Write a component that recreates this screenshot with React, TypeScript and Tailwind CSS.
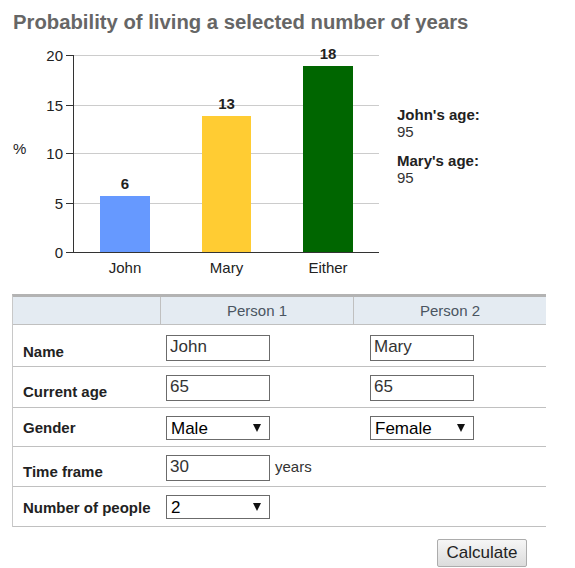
import React from 'react';

const bars = [
  { name: 'John', value: '6', x: 100, w: 50, top: 196, color: '#6699ff' },
  { name: 'Mary', value: '13', x: 202, w: 49, top: 116, color: '#ffcc33' },
  { name: 'Either', value: '18', x: 303, w: 50, top: 66, color: '#006600' },
];

const ticks = [
  { label: '20', y: 55.5 },
  { label: '15', y: 105.5 },
  { label: '10', y: 153.5 },
  { label: '5', y: 203.5 },
  { label: '0', y: 252.5 },
];

function Chart() {
  return (
    <svg width={390} height={245} viewBox="0 40 390 245" className="shrink-0">
      {ticks.slice(0, 4).map(t => (
        <line key={t.label} x1={74} x2={379} y1={t.y} y2={t.y} stroke="#cccccc" strokeWidth={1} />
      ))}
      {ticks.map(t => (
        <g key={'t' + t.label}>
          <line x1={66} x2={74} y1={t.y} y2={t.y} stroke="#333" strokeWidth={1} />
          <text x={63} y={t.y + 5} textAnchor="end" fontSize={15} fill="#222">{t.label}</text>
        </g>
      ))}
      <text x={13} y={154} fontSize={15} fill="#222">%</text>
      {bars.map(b => (
        <g key={b.name}>
          <rect x={b.x} y={b.top} width={b.w} height={252 - b.top} fill={b.color} />
          <text x={b.x + b.w / 2} y={b.top - 7.5} textAnchor="middle" fontSize={15} fontWeight="bold" fill="#222">{b.value}</text>
          <text x={b.x + b.w / 2} y={272.5} textAnchor="middle" fontSize={15} fill="#222">{b.name}</text>
        </g>
      ))}
      <line x1={73.5} x2={73.5} y1={55} y2={253} stroke="#333" strokeWidth={1} />
      <line x1={73} x2={379} y1={252.5} y2={252.5} stroke="#333" strokeWidth={1} />
    </svg>
  );
}

function TextBox({ value, className }: { value: string; className?: string }) {
  return (
    <input
      type="text"
      defaultValue={value}
      className={`w-[104px] h-[26px] border border-[#6b6b6b] bg-white px-[3px] pb-[2px] text-[17px] leading-[19px] text-[#333] outline-none ${className ?? ''}`}
    />
  );
}

function Select({ value, options, className }: { value: string; options: string[]; className?: string }) {
  return (
    <div className={`relative w-[104px] h-[24px] ${className ?? ''}`}>
      <select
        defaultValue={value}
        className="appearance-none w-full h-full border border-[#6b6b6b] bg-white pl-[4px] text-[17px] leading-[19px] text-black outline-none"
      >
        {options.map(o => (
          <option key={o}>{o}</option>
        ))}
      </select>
      <svg width={8} height={8} viewBox="0 0 8 8" className="absolute right-[9px] top-[8px] pointer-events-none">
        <path d="M0 0 L8 0 L4 8 Z" fill="#111" />
      </svg>
    </div>
  );
}

export default function App() {
  return (
    <div className="w-[575px] h-[568px] bg-white font-['Liberation_Sans',Arial,sans-serif] text-[#222]">
      <h1 className="h-[40px] pt-[10px] pl-[13px] text-[20.3px] leading-[24px] font-bold text-[#666]">
        Probability of living a selected number of years
      </h1>

      <div className="flex">
        <Chart />
        <div className="pl-[7px] pt-[66px] text-[15px] leading-[17px]">
          <div className="font-bold text-[#222]">John's age:</div>
          <div className="text-[#333]">95</div>
          <div className="mt-[12px] font-bold text-[#222]">Mary's age:</div>
          <div className="text-[#333]">95</div>
        </div>
      </div>

      <div className="mt-[9px] ml-[12px] w-[534px] border-t-[3px] border-t-[#b3b3b3] border-l border-l-[#c8c8c8]">
        <div className="grid grid-cols-[147px_193px_193px] h-[28px] bg-[#e4ebf2] border-b border-b-[#c0c0c0] text-[15px] leading-[27px] text-[#4a5561]">
          <div />
          <div className="border-l border-l-[#c0c0c0] text-center">Person 1</div>
          <div className="border-l border-l-[#c0c0c0] text-center">Person 2</div>
        </div>

        <div className="grid grid-cols-[147px_193px_193px] h-[42px] border-b border-b-[#c0c0c0]">
          <div className="pl-[10px] pt-[18px] text-[15px] leading-[17px] font-bold">Name</div>
          <div className="pt-[10px] pl-[6px]"><TextBox value="John" /></div>
          <div className="pt-[10px] pl-[17px]"><TextBox value="Mary" /></div>
        </div>

        <div className="grid grid-cols-[147px_193px_193px] h-[41px] border-b border-b-[#c0c0c0]">
          <div className="pl-[10px] pt-[16px] text-[15px] leading-[17px] font-bold">Current age</div>
          <div className="pt-[8px] pl-[6px]"><TextBox value="65" /></div>
          <div className="pt-[8px] pl-[17px]"><TextBox value="65" /></div>
        </div>

        <div className="grid grid-cols-[147px_193px_193px] h-[39px] border-b border-b-[#c0c0c0]">
          <div className="pl-[10px] pt-[11px] text-[15px] leading-[17px] font-bold">Gender</div>
          <div className="pt-[8px] pl-[6px]"><Select value="Male" options={['Male', 'Female']} /></div>
          <div className="pt-[8px] pl-[17px]"><Select value="Female" options={['Male', 'Female']} /></div>
        </div>

        <div className="grid grid-cols-[147px_386px] h-[40px] border-b border-b-[#c0c0c0]">
          <div className="pl-[10px] pt-[16px] text-[15px] leading-[17px] font-bold">Time frame</div>
          <div className="pt-[8px] pl-[6px] flex items-start gap-[5px]">
            <TextBox value="30" />
            <span className="pt-[3px] text-[15px] leading-[17px] text-[#333]">years</span>
          </div>
        </div>

        <div className="grid grid-cols-[147px_386px] h-[40px] border-b border-b-[#c0c0c0]">
          <div className="pl-[10px] pt-[12px] text-[15px] leading-[17px] font-bold">Number of people</div>
          <div className="pt-[8px] pl-[6px]"><Select value="2" options={['1', '2']} /></div>
        </div>
      </div>

      <div className="mt-[12px] pl-[437px]">
        <button className="w-[90px] h-[28px] rounded-[2px] border border-[#acacac] bg-gradient-to-b from-[#f6f6f6] to-[#dcdcdc] text-[17px] leading-[20px] text-[#222]">
          Calculate
        </button>
      </div>
    </div>
  );
}
